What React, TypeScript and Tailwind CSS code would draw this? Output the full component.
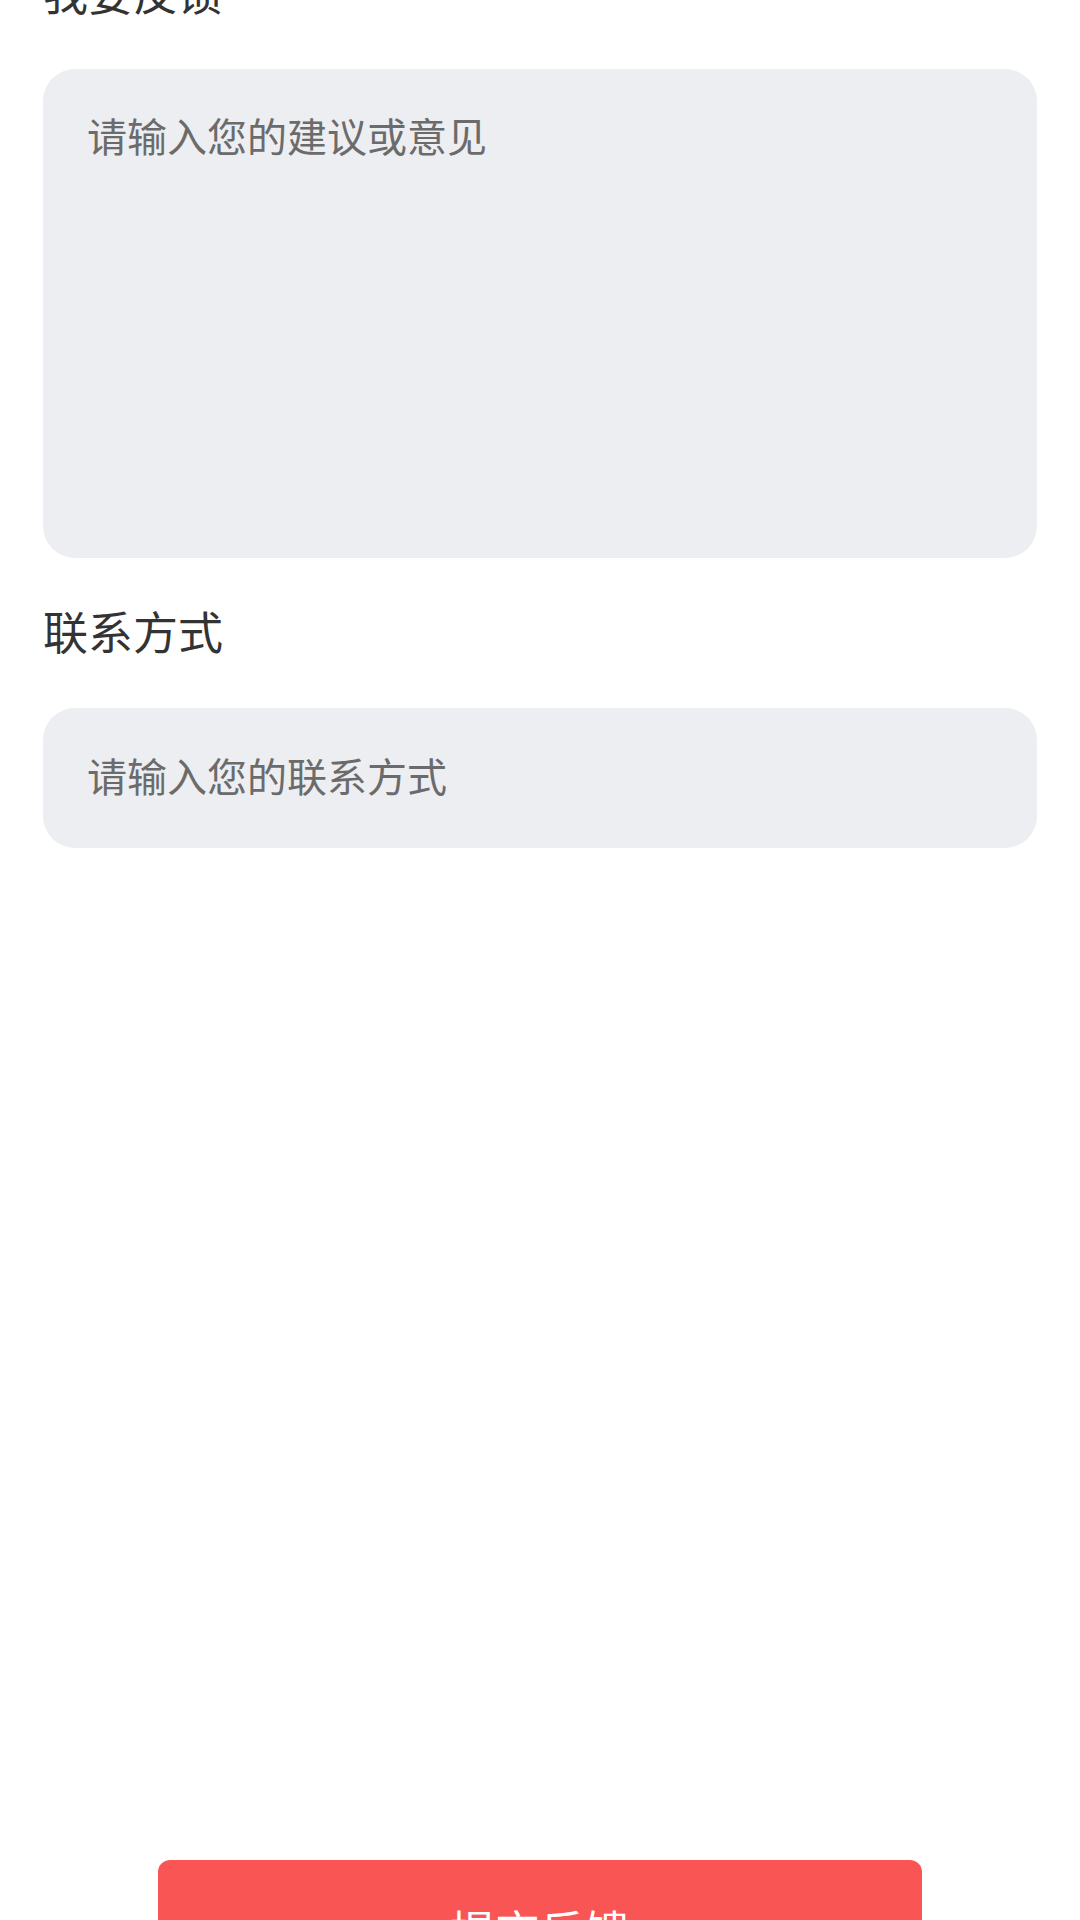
export default function App() {
  const font = { fontFamily: '"Noto Sans CJK SC", "Noto Sans", sans-serif' }
  return (
    <div
      className="w-[1080px] h-[1920px] overflow-hidden bg-white flex flex-col px-[43px]"
      style={font}
    >
      {/* Feedback */}
      <div className="-mt-[38px] h-[60px] shrink-0 leading-[60px] text-[45px] text-[#333333]">我要反馈</div>
      <textarea
        className="mt-[47px] h-[489px] w-full shrink-0 resize-none rounded-[32px] bg-[#edeef2] px-[44px] pt-[38px] text-[40px] leading-[56px] text-[#333333] placeholder:text-[#6b6b6b] outline-none"
        placeholder="请输入您的建议或意见"
      />

      {/* Contact */}
      <div className="mt-[43px] h-[60px] shrink-0 leading-[60px] text-[45px] text-[#333333]">联系方式</div>
      <input
        className="mt-[47px] h-[140px] w-full shrink-0 rounded-[32px] bg-[#edeef2] px-[44px] pb-[6px] text-[40px] text-[#333333] placeholder:text-[#6b6b6b] outline-none"
        placeholder="请输入您的联系方式"
      />

      {/* Submit */}
      <div className="mt-[1012px] flex shrink-0 justify-center">
        <button className="h-[140px] w-[764px] shrink-0 rounded-[12px] bg-[#f95555] text-[45px] text-white">
          提交反馈
        </button>
      </div>
    </div>
  )
}
